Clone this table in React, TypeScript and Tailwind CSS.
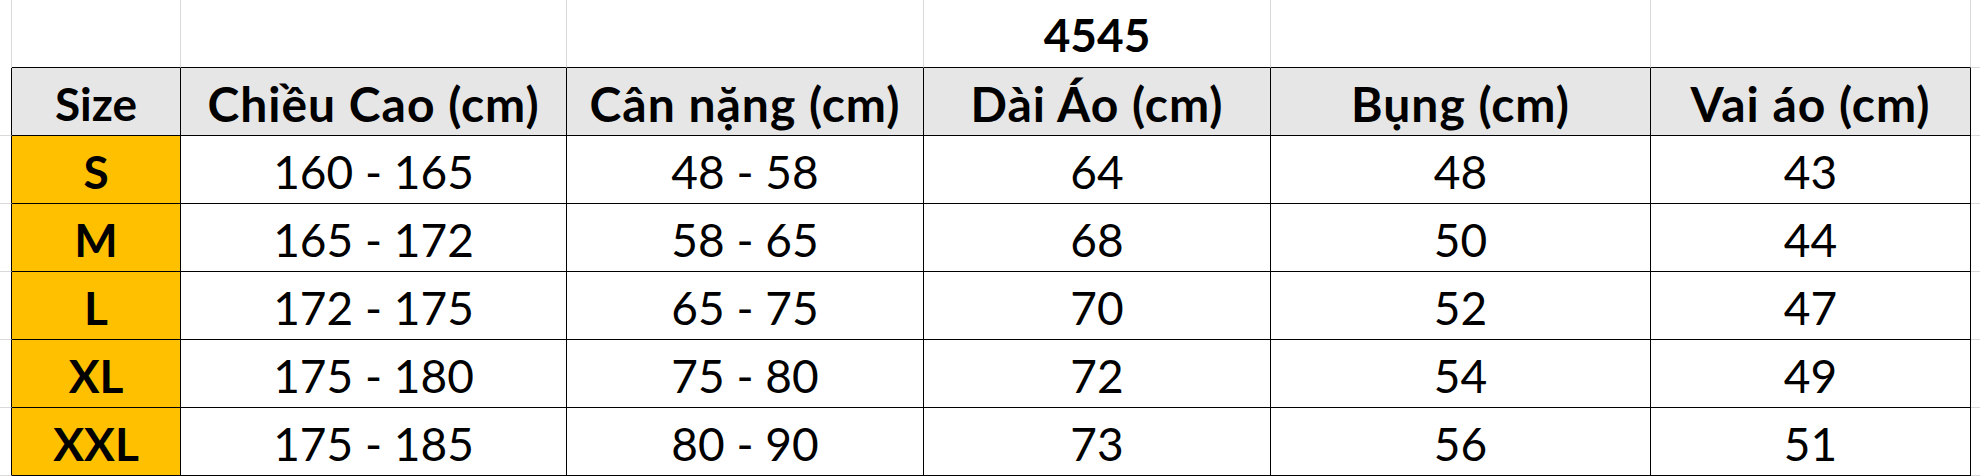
import React from 'react';

const FONT = { fontFamily: 'Lato, "Open Sans", "Noto Sans", sans-serif' };

const headers = ['Size', 'Chiều Cao (cm)', 'Cân nặng (cm)', 'Dài Áo (cm)', 'Bụng (cm)', 'Vai áo (cm)'];

const rows = [
  ['S', '160 - 165', '48 - 58', '64', '48', '43'],
  ['M', '165 - 172', '58 - 65', '68', '50', '44'],
  ['L', '172 - 175', '65 - 75', '70', '52', '47'],
  ['XL', '175 - 180', '75 - 80', '72', '54', '49'],
  ['XXL', '175 - 185', '80 - 90', '73', '56', '51'],
];

// Excel gridline column widths (incl. 1px right border)
const gridCols = 'grid grid-cols-[12px_169px_386px_357px_347px_380px_320px_9px]';

const GridCell = ({ children, last }: any) => (
  <div className={`h-[68px] border-b border-[#d9d9d9] ${last ? '' : 'border-r'} flex items-center justify-center`}>
    {children}
  </div>
);

const SizeChart: React.FC = () => {
  return (
    <div className="w-[1980px] h-[476px] bg-white overflow-hidden text-black" style={FONT}>
      {/* Title row */}
      <div className={gridCols}>
        <div className="h-[68px] border-r border-[#d9d9d9]" />
        {headers.map((_, i) => (
          <div key={i} className="h-[68px] border-r border-b border-r-[#d9d9d9] border-b-black flex items-center justify-center">
            {i === 3 && <span className="text-[46px] font-bold leading-none pt-[2px]">4545</span>}
          </div>
        ))}
        <div className="h-[68px] border-b border-[#d9d9d9]" />
      </div>

      {/* Header row */}
      <div className={gridCols}>
        <div className="h-[68px] border-r border-b border-r-black border-b-[#d9d9d9]" />
        {headers.map((h, i) => (
          <div key={h} className="h-[68px] border-r border-b border-black bg-[#e6e6e6] flex items-center justify-center">
            <span className={`font-bold leading-none pt-[4px] ${i === 0 ? 'text-[46px]' : 'text-[48px] tracking-[1px]'}`}>{h}</span>
          </div>
        ))}
        <GridCell last />
      </div>

      {/* Data rows */}
      {rows.map((r, ri) => (
        <div key={ri} className={gridCols}>
          <div className="h-[68px] border-r border-b border-r-black border-b-[#d9d9d9]" />
          {r.map((v, ci) => (
            <div
              key={ci}
              className={`h-[68px] border-r border-b border-black flex items-center justify-center ${ci === 0 ? 'bg-[#ffc000]' : 'bg-white'}`}
            >
              <span className={`text-[46px] leading-none pt-[4px] ${ci === 0 ? 'font-bold' : 'font-normal'}`}>{v}</span>
            </div>
          ))}
          <GridCell last />
        </div>
      ))}
    </div>
  );
};

export default function App() {
  return <SizeChart />;
}
